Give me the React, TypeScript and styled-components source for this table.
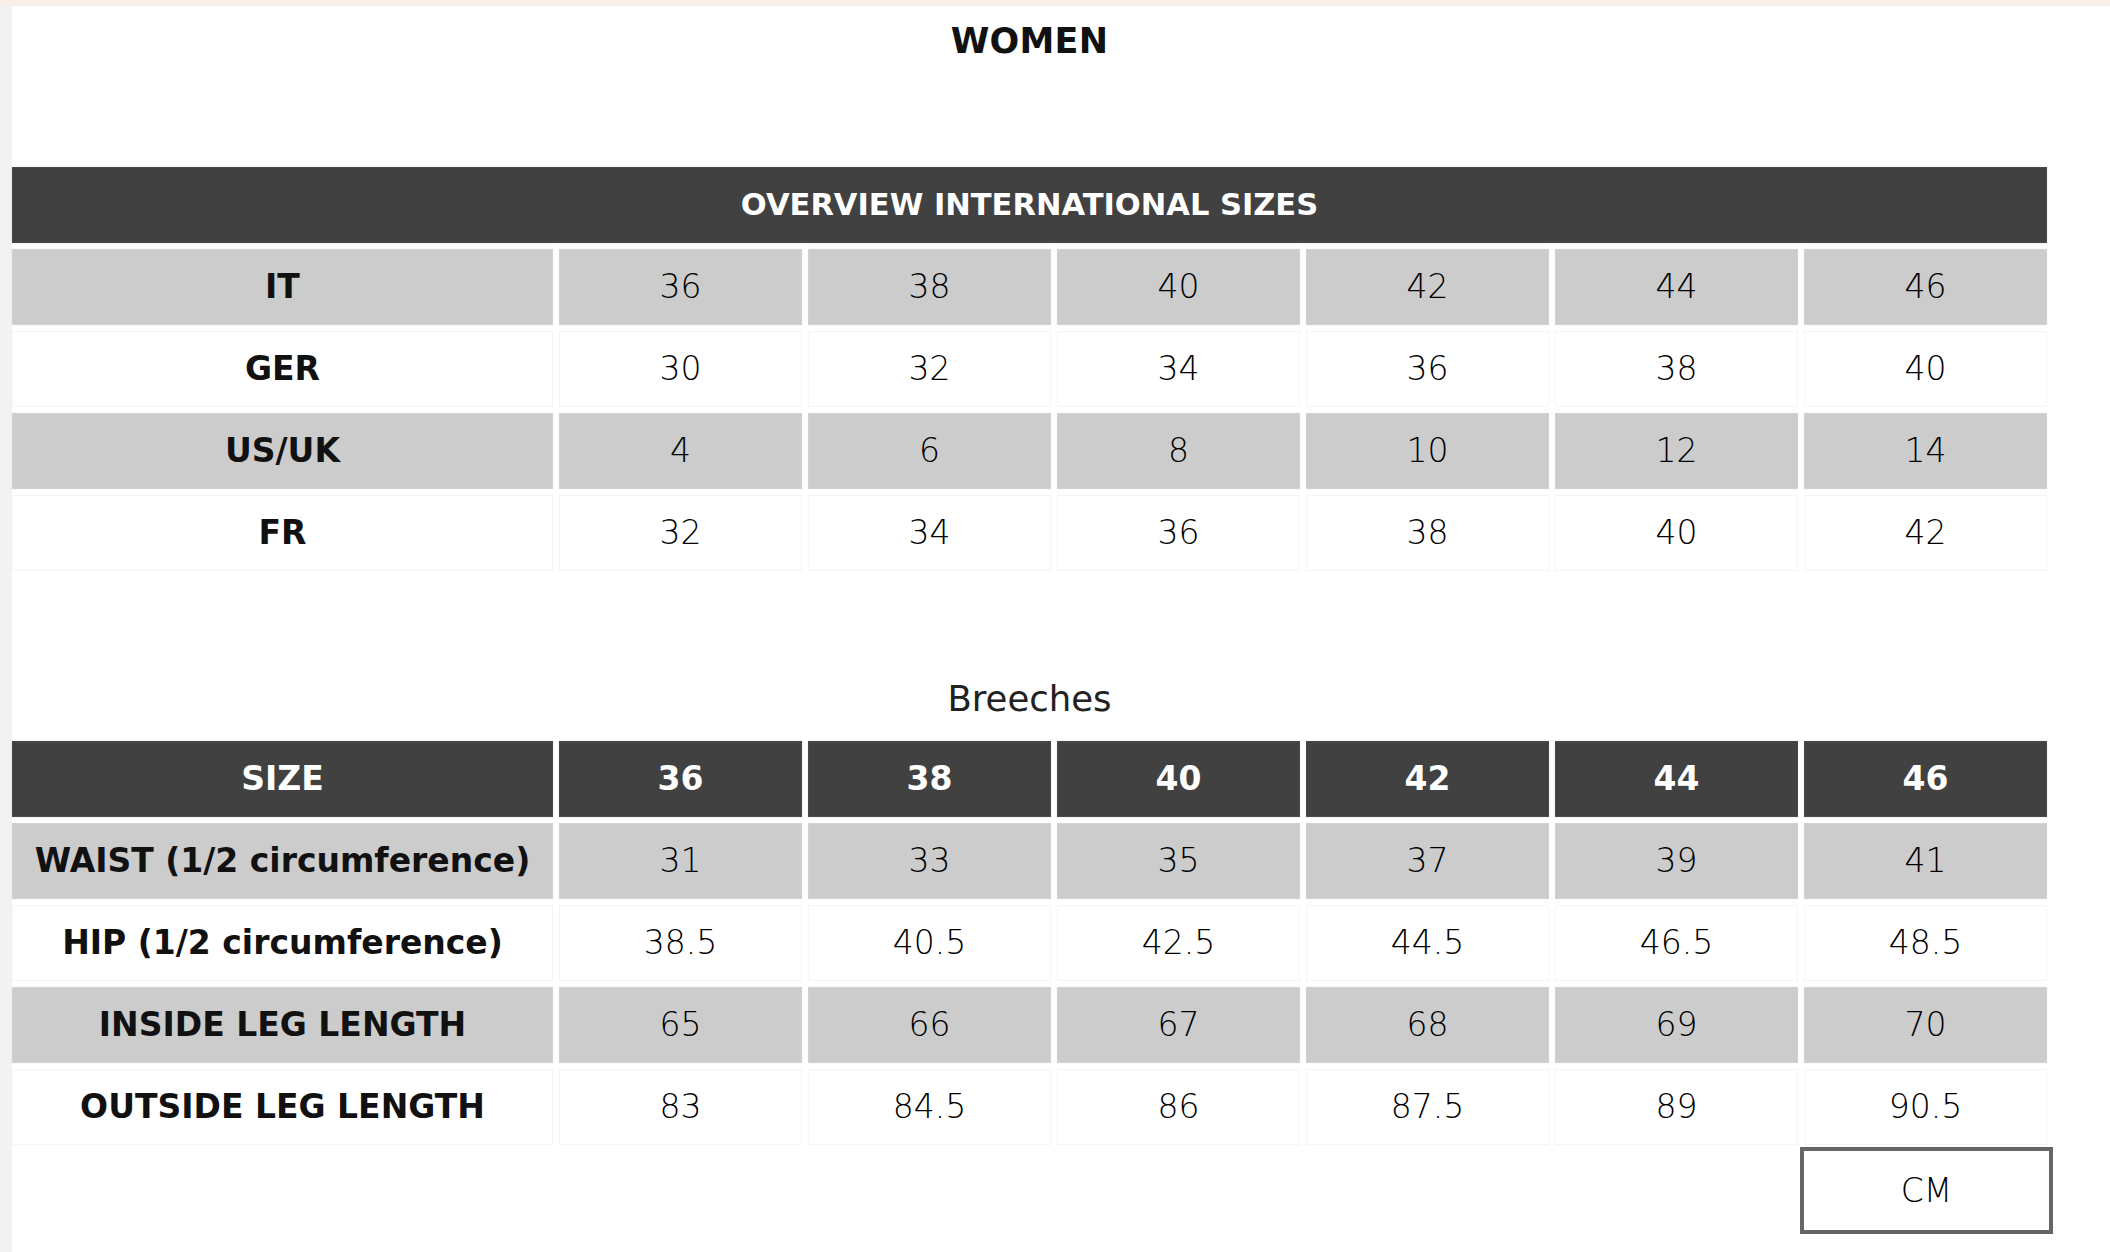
import React from "react";
import styled, { createGlobalStyle, css } from "styled-components";

const GlobalStyle = createGlobalStyle`
  html, body {
    margin: 0;
    padding: 0;
    background: #ffffff;
  }
  body {
    font-family: "DejaVu Sans", "Liberation Sans", sans-serif;
    color: #111;
  }
`;

const Page = styled.div`
  width: 2110px;
  min-height: 1252px;
  box-sizing: border-box;
  border-top: 6px solid #f9eeea;
  display: flex;
`;

const LeftStrip = styled.div`
  width: 12px;
  flex: none;
  background: #f2f2f2;
`;

const Content = styled.div`
  width: 2035px;
  display: flex;
  flex-direction: column;
  padding-top: 15px;
`;

const Title = styled.h1`
  margin: 0;
  height: 40px;
  line-height: 40px;
  text-align: center;
  font-size: 35px;
  font-weight: 700;
  color: #111;
  letter-spacing: 0.2px;
`;

const SubTitle = styled.h2`
  margin: 108px 0 0;
  height: 40px;
  line-height: 40px;
  text-align: center;
  font-size: 35.5px;
  font-weight: 400;
  color: #222;
`;

const Table = styled.div<{ $mt: number }>`
  margin-top: ${(p) => p.$mt}px;
  display: grid;
  grid-template-columns: 541px repeat(6, 243px);
  grid-auto-rows: 76px;
  gap: 6px;
`;

type Variant = "dark" | "gray" | "white";

const Cell = styled.div<{ $variant: Variant; $label?: boolean; $span?: boolean }>`
  display: flex;
  align-items: center;
  justify-content: center;
  box-sizing: border-box;
  font-size: 33px;
  line-height: 40px;
  white-space: nowrap;
  ${(p) => p.$span && css`grid-column: 1 / -1;`}
  ${(p) =>
    p.$variant === "dark"
      ? css`
          background: #414141;
          color: #ffffff;
          font-weight: 700;
          border: 1px solid #4a4a4a;
          box-shadow: 0 0 2px rgba(0, 0, 0, 0.12);
        `
      : p.$variant === "gray"
      ? css`
          background: #cccccc;
          border: 1px solid #d2d2d2;
          box-shadow: 0 0 2px rgba(0, 0, 0, 0.06);
        `
      : css`
          background: #ffffff;
          border: 1px solid #f5f5f5;
        `}
  ${(p) =>
    p.$variant !== "dark" &&
    (p.$label
      ? css`
          font-weight: 700;
          color: #111;
        `
      : css`
          font-weight: 300;
          color: #000;
        `)}
`;

const HeaderText = styled.span`
  font-size: 30.5px;
  font-weight: 700;
  color: #fff;
`;

const Footer = styled.div`
  display: flex;
  justify-content: flex-end;
  margin-right: -6px;
  margin-top: 2px;
`;

const UnitBox = styled.div`
  width: 253px;
  height: 87px;
  box-sizing: border-box;
  border: 4px solid #666666;
  display: flex;
  align-items: center;
  justify-content: center;
  font-size: 33px;
  font-weight: 300;
  color: #000;
  background: #fff;
`;

const intl: { label: string; values: string[] }[] = [
  { label: "IT", values: ["36", "38", "40", "42", "44", "46"] },
  { label: "GER", values: ["30", "32", "34", "36", "38", "40"] },
  { label: "US/UK", values: ["4", "6", "8", "10", "12", "14"] },
  { label: "FR", values: ["32", "34", "36", "38", "40", "42"] },
];

const breeches: { label: string; values: string[] }[] = [
  { label: "WAIST (1/2 circumference)", values: ["31", "33", "35", "37", "39", "41"] },
  { label: "HIP (1/2 circumference)", values: ["38.5", "40.5", "42.5", "44.5", "46.5", "48.5"] },
  { label: "INSIDE LEG LENGTH", values: ["65", "66", "67", "68", "69", "70"] },
  { label: "OUTSIDE LEG LENGTH", values: ["83", "84.5", "86", "87.5", "89", "90.5"] },
];

const sizes = ["36", "38", "40", "42", "44", "46"];

function Rows({ rows }: { rows: { label: string; values: string[] }[] }) {
  return (
    <>
      {rows.map((r, i) => {
        const v: Variant = i % 2 === 0 ? "gray" : "white";
        return (
          <React.Fragment key={r.label}>
            <Cell $variant={v} $label>
              {r.label}
            </Cell>
            {r.values.map((val, j) => (
              <Cell key={j} $variant={v}>
                {val}
              </Cell>
            ))}
          </React.Fragment>
        );
      })}
    </>
  );
}

export default function App() {
  return (
    <>
      <GlobalStyle />
      <Page>
        <LeftStrip />
        <Content>
          <Title>WOMEN</Title>
          <Table $mt={106}>
            <Cell $variant="dark" $span>
              <HeaderText>OVERVIEW INTERNATIONAL SIZES</HeaderText>
            </Cell>
            <Rows rows={intl} />
          </Table>
          <SubTitle>Breeches</SubTitle>
          <Table $mt={22}>
            <Cell $variant="dark">SIZE</Cell>
            {sizes.map((s) => (
              <Cell key={s} $variant="dark">
                {s}
              </Cell>
            ))}
            <Rows rows={breeches} />
          </Table>
          <Footer>
            <UnitBox>CM</UnitBox>
          </Footer>
        </Content>
      </Page>
    </>
  );
}
